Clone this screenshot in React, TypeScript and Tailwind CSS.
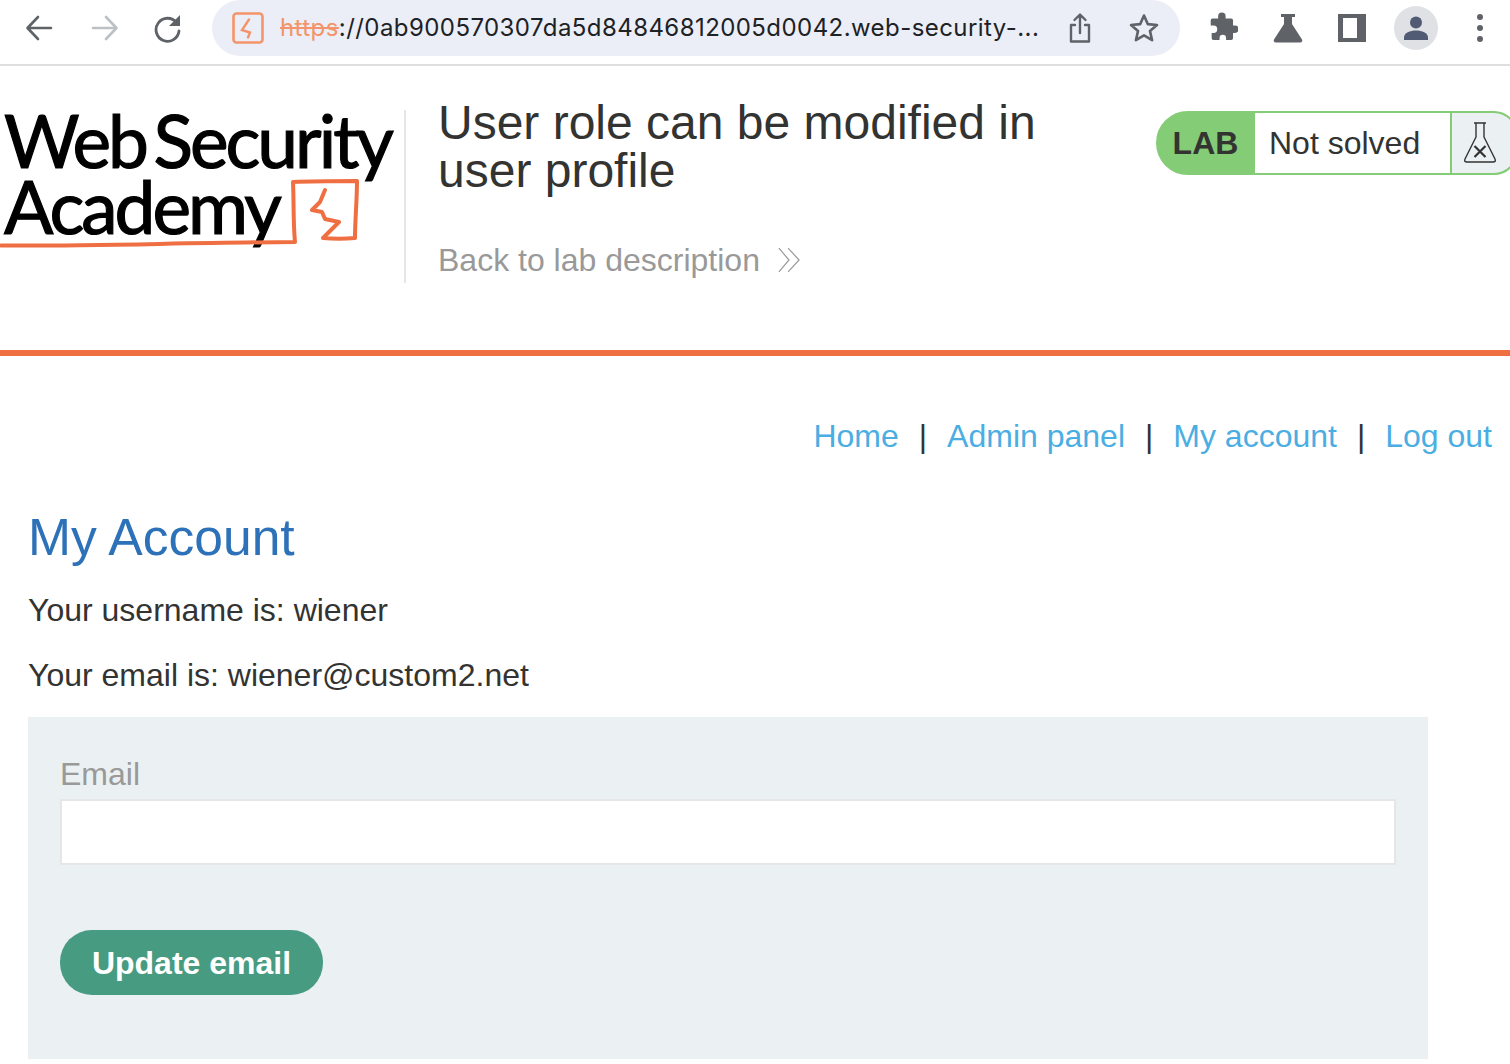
import { useState } from "react";

const sans = "font-['Liberation_Sans',Arial,sans-serif]";

function ChromeBar() {
  return (
    <div className="flex h-[66px] items-center border-b-2 border-[#dedfe1] bg-white pb-[8px] pl-[24px]">
      {/* back, forward, reload */}
      <svg width="32" height="32" viewBox="0 0 32 32" fill="none" stroke="#5f6368" strokeWidth="2.6" strokeLinecap="round" strokeLinejoin="round">
        <path d="M27 16H4M14 5 3.500 16 14 27" />
      </svg>
      <svg className="ml-[32px]" width="32" height="32" viewBox="0 0 32 32" fill="none" stroke="#bdc0c4" strokeWidth="2.6" strokeLinecap="round" strokeLinejoin="round">
        <path d="M5 16h23M18 5l10.500 11L18 27" />
      </svg>
      <svg className="ml-[32px]" width="32" height="32" viewBox="0 0 32 32" fill="none">
        <path d="M24.500 10.500A11.500 11.500 0 1 0 27 19" stroke="#5f6368" strokeWidth="2.8" strokeLinecap="round" />
        <path d="M28 3v11H17z" fill="#5f6368" />
      </svg>
      <div className="ml-[28px] flex h-[56px] w-[968px] items-center rounded-full bg-[#ebeef7] pl-[20px]">
        <svg width="32" height="32" viewBox="0 0 32 32" fill="none">
          <rect x="1.500" y="1.500" width="29" height="29" rx="3" stroke="#f4946a" strokeWidth="2.6" />
          <path d="M17 7.500 10 18l8 2.500-2 5" stroke="#f4946a" strokeWidth="2.400" strokeLinejoin="miter" strokeLinecap="round" />
        </svg>
        <div className="ml-[16px] w-[766px] truncate font-['Inter',sans-serif] text-[24px] leading-[32px] tracking-[0.43px] text-[#202124]">
          <span className="text-[#f4946a] line-through">https</span>://0ab900570307da5d84846812005d0042.web-security-...
        </div>
        <svg className="ml-[18px]" width="32" height="32" viewBox="0 0 32 32" fill="none" stroke="#5f6368" strokeWidth="2.400" strokeLinecap="round" strokeLinejoin="round">
          <path d="M11 13H7v16.500h18V13h-4M16 21V3M10.500 8 16 2.500 21.500 8" />
        </svg>
        <svg className="ml-[32px]" width="32" height="32" viewBox="0 0 32 32" fill="none" stroke="#5f6368" strokeWidth="2.600" strokeLinejoin="round">
          <path d="M16 3.500l3.800 8.600 9.200.9-7 6.100 2.100 9.100-8.100-4.800-8.100 4.800 2.100-9.100-7-6.100 9.200-.9z" />
        </svg>
      </div>
      <svg className="ml-[26px]" width="32" height="32" viewBox="0 0 32 32" fill="#5f6368">
        <path d="M12 4.500a4 4 0 0 1 8 0V7h6a2 2 0 0 1 2 2v5.500h2a4 4 0 0 1 0 8h-2V28a2 2 0 0 1-2 2h-5.500v-2a3.500 3.500 0 0 0-7 0v2H7a2 2 0 0 1-2-2v-5.500h2a4 4 0 0 0 0-8H4V9a2 2 0 0 1 2-2h6z" transform="translate(1 0) scale(.93)" />
      </svg>
      <svg className="ml-[34px]" width="32" height="32" viewBox="0 0 32 32" fill="#5f6368">
        <path d="M9 2h14v3h-3v7l10 15.500c.8 1.500 0 3-2 3H4c-2 0-2.800-1.500-2-3L12 12V5H9z" />
      </svg>
      <svg className="ml-[32px]" width="32" height="32" viewBox="0 0 32 32">
        <path fill="#5f6368" d="M2 2h28v28H2z" />
        <path fill="#fff" d="M7 6h14v20H7z" />
      </svg>
      <div className="ml-[26px] flex h-[44px] w-[44px] items-center justify-center rounded-full bg-[#dfe1e5]">
        <svg width="28" height="28" viewBox="0 0 28 28" fill="#515c74">
          <circle cx="14" cy="8.500" r="6" />
          <path d="M2 26v-2.500C2 19 8 16.500 14 16.500S26 19 26 23.500V26z" />
        </svg>
      </div>
      <div className="ml-[39px] flex flex-col gap-[5px]">
        <span className="h-[6px] w-[6px] rounded-full bg-[#5f6368]" />
        <span className="h-[6px] w-[6px] rounded-full bg-[#5f6368]" />
        <span className="h-[6px] w-[6px] rounded-full bg-[#5f6368]" />
      </div>
    </div>
  );
}

function Logo() {
  return (
    <div className="relative h-[173px] w-[404px] shrink-0">
      <div className="whitespace-nowrap pl-[4px] font-['Lato',sans-serif] text-[73px] leading-[66px] tracking-[-3px] text-black [-webkit-text-stroke:1.2px_black] [word-spacing:-8px]">
        <div className="-mt-[3px]">Web Security</div>
        <div>Academy</div>
      </div>
      <svg className="absolute left-0 top-0" width="404" height="173" viewBox="0 0 404 173" fill="none" stroke="#ef6f43" strokeWidth="4" strokeLinecap="round" strokeLinejoin="round">
        <path d="M1 135.500c80 1 190-3 294-3.500-2-20-1-40-2-60 20-1 43-1 64-1 0 19-2 39-2 57-11 1-21 1-32 0l16-16-14-3-3-7-10-2 8-8 5-12" />
      </svg>
    </div>
  );
}

function LabStatus() {
  return (
    <div className="mr-[-8px] mt-[1px] flex h-[64px] shrink-0 overflow-hidden rounded-l-[32px] rounded-r-[24px] border-2 border-[#84cc76] bg-[#84cc76]">
      <div className="flex w-[97px] items-center justify-center pr-[2px] text-[32px] font-bold text-[#333332]">LAB</div>
      <div className="flex w-[195px] items-center bg-white pl-[14px] text-[32px] text-[#333332]">Not solved</div>
      <div className="flex w-[66px] items-center border-l-2 border-[#84cc76] bg-[#ebf0f2] pl-[11px]">
        <svg width="34" height="44" viewBox="0 0 34 44" fill="none" stroke="#333332" strokeWidth="1.400" strokeLinejoin="round">
          <path d="M11 2h12M13 2v14L2 38c-1 2 0 3 2 3h26c2 0 3-1 2-3L21 16V2" />
          <path d="M11.500 25l11 11M22.500 25l-11 11" strokeWidth="2.200" />
        </svg>
      </div>
    </div>
  );
}

export default function App() {
  const [email, setEmail] = useState("");

  return (
    <div className={`h-[1064px] w-full overflow-hidden bg-white ${sans} text-[#333332]`}>
      <ChromeBar />

      <header className="flex h-[290px] border-b-[6px] border-[#ef6f43] pt-[44px]">
        <Logo />
        <div className="h-[173px] w-[2px] shrink-0 bg-[#e6e6e6]" />
        <div className="ml-[32px] w-[660px] -mt-[11px]">
          <h2 className="text-[48px] leading-[48px] text-[#333332]">User role can be modified in user profile</h2>
          <a className="mt-[45px] flex items-center text-[32px] leading-[40px] text-[#999999]">
            Back to lab description
            <svg className="ml-[18px]" width="22" height="28" viewBox="0 0 24 28" fill="none" stroke="#999999" strokeWidth="1.300">
              <path d="M1 1l11 13L1 27M11 1l12 13-12 13" />
            </svg>
          </a>
        </div>
        <div className="ml-auto">
          <LabStatus />
        </div>
      </header>

      <main className="px-[28px]">
        <nav className="mr-[-10px] flex justify-end pt-[60px] text-[32px] leading-[40px] text-[#333332]">
          <a className="text-[#4aaee3]">Home</a>
          <span className="mx-[20px]">|</span>
          <a className="text-[#4aaee3]">Admin panel</a>
          <span className="mx-[20px]">|</span>
          <a className="text-[#4aaee3]">My account</a>
          <span className="mx-[20px]">|</span>
          <a className="text-[#4aaee3]">Log out</a>
        </nav>

        <h1 className="mt-[51px] text-[51.6px] leading-[60px] text-[#2d72b8]">My Account</h1>
        <p className="mt-[23px] text-[32px] leading-[40px]">Your username is: wiener</p>
        <p className="mt-[25px] text-[32px] leading-[40px]">Your email is: wiener@custom2.net</p>

        <form className="mt-[22px] h-[342px] w-[1400px] bg-[#ebf0f2] px-[32px] pt-[37px]" onSubmit={(e) => e.preventDefault()}>
          <label className="block text-[32px] leading-[40px] text-[#999999]">Email</label>
          <input
            type="email"
            value={email}
            onChange={(e) => setEmail(e.target.value)}
            className="mt-[5px] block h-[66px] w-[1336px] border-2 border-[#e6e6e6] bg-white outline-none"
          />
          <button type="submit" className="mt-[65px] h-[65px] w-[263px] rounded-[32px] bg-[#479b81] text-[32px] font-bold text-white">
            Update email
          </button>
        </form>
      </main>
    </div>
  );
}
